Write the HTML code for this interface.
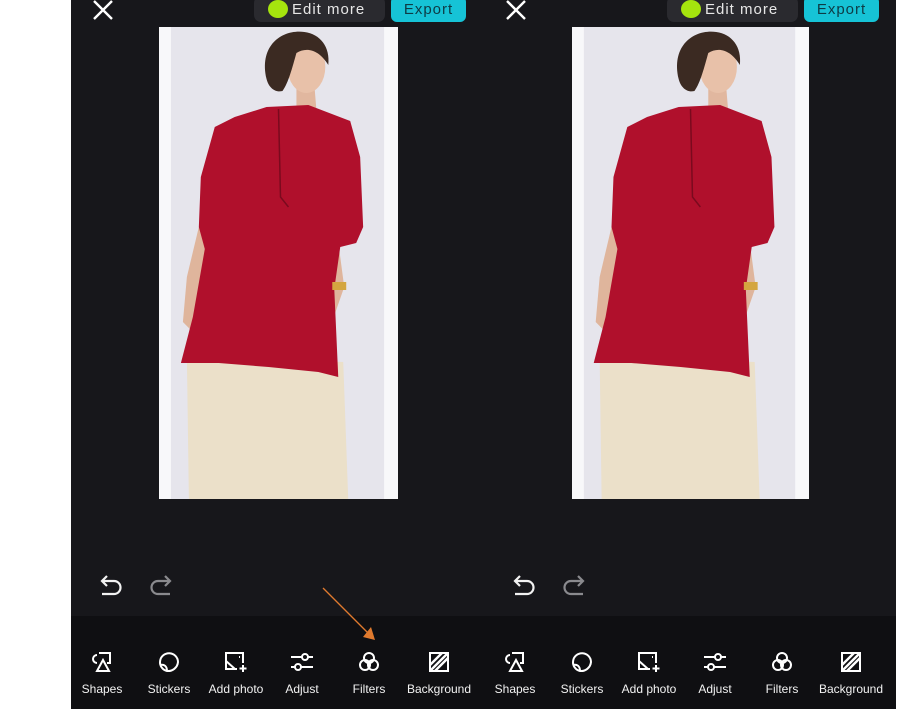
<!DOCTYPE html>
<html><head><meta charset="utf-8"><style>
*{margin:0;padding:0;box-sizing:border-box}
body{width:905px;height:713px;background:#fff;position:relative;overflow:hidden;font-family:"Liberation Sans",sans-serif}
#dark{position:absolute;left:71px;top:0;width:825px;height:709px;background:#17171b}
#tb{position:absolute;left:71px;top:616px;width:825px;height:93px;background:#0f0f12}
.p{position:absolute;top:0;width:413px;height:709px}
.x{position:absolute;left:20px;top:-2px}
.em{position:absolute;left:183px;top:-4px;width:131px;height:26px;background:#2a2a2f;border-radius:7px;color:#e6e6e6;font-size:15px;letter-spacing:1px;line-height:28px;padding-left:38px}
.em i{position:absolute;left:14px;top:4px;width:20px;height:18px;border-radius:50%;background:#a5e40e}
.ex{position:absolute;left:320px;top:-4px;width:75px;height:26px;background:#16c3d6;border-radius:6px;color:#0e3b45;font-size:15px;letter-spacing:1px;line-height:28px;text-align:center}
.ph{position:absolute;left:88px;top:27px}
.u{position:absolute;top:575px}
.it{position:absolute;top:651px;width:84px;margin-left:-42px;text-align:center;color:#f2f2f2;font-size:12px}
.it svg{display:block;margin:0 auto 9px}
</style></head><body>
<div id="dark"></div><div id="tb"></div>

<div class="p" style="left:71px">
<svg class="x" width="24" height="24" viewBox="0 0 24 24"><path d="M3 3L21 21M21 3L3 21" stroke="#fff" stroke-width="2.4"/></svg>
<div class="em"><i></i>Edit more</div><div class="ex">Export</div>
<svg class="ph" width="239" height="472" viewBox="0 0 240 472" preserveAspectRatio="none">
<rect width="240" height="472" fill="#f8f8fa"/><rect x="12" y="0" width="214" height="472" fill="#e6e5ec"/>
<path d="M40 200L28 250L24 295L34 305L46 260L50 215Z" fill="#dfb59c"/>
<path d="M180 215L186 260L172 300L160 296L174 255L172 220Z" fill="#dfb59c"/>
<path d="M28 330L185 335L190 472L30 472Z" fill="#ebe0c9"/>
<path d="M138 58L156 58L158 82L138 82Z" fill="#e1b79f"/>
<ellipse cx="148" cy="40" rx="19" ry="26" fill="#e8c1a9"/>
<path d="M108 52C100 18 124 2 146 5C162 7 172 20 170 38C160 22 148 20 138 26C134 40 130 56 124 64C116 66 110 60 108 52Z" fill="#3b2a22"/>
<path d="M108 80L150 78L192 94L202 130L205 200L198 216L182 220L176 262L180 350L160 345L110 340L60 336L22 336L34 290L46 222L40 200L42 150L56 100L76 90Z" fill="#b0102c"/>
<path d="M120 82L122 170L130 180" stroke="#7a0a1e" stroke-width="1.5" fill="none"/>
<rect x="174" y="255" width="14" height="8" fill="#d4a640"/>
</svg>
<svg class="u" style="left:27px" width="26" height="26" viewBox="0 0 26 26"><path d="M4 6H16A6.5 6.5 0 0 1 16 19H4M9 1L4 6L9 11" stroke="#f2f2f2" stroke-width="2.2" fill="none"/></svg>
<svg class="u" style="left:77px" width="26" height="26" viewBox="0 0 26 26"><path d="M22 6H10A6.5 6.5 0 0 0 10 19H22M17 1L22 6L17 11" stroke="#8a8a8e" stroke-width="2.2" fill="none"/></svg>
<div class="it" style="left:31px"><svg width="24" height="22" viewBox="0 0 24 22"><path d="M7 4A4 4 0 0 0 7 12M9 2H20V12H17M13 9L7 20H19Z" stroke="#fff" stroke-width="2" fill="none"/></svg>Shapes</div>
<div class="it" style="left:98px"><svg width="24" height="22" viewBox="0 0 24 22"><path d="M10 20A9 9 0 1 1 21 11A10 10 0 0 1 10 20ZM10 20C10 15 7 13 3 14" stroke="#fff" stroke-width="2" fill="none"/></svg>Stickers</div>
<div class="it" style="left:165px"><svg width="24" height="22" viewBox="0 0 24 22"><path d="M13 18H2V2H19V12M2 10L11 18M15 6h1M19 14V21M15.5 17.5H22.5" stroke="#fff" stroke-width="2" fill="none"/></svg>Add photo</div>
<div class="it" style="left:231px"><svg width="24" height="22" viewBox="0 0 24 22"><path d="M1 6H12M18 6H23M1 16H5M11 16H23" stroke="#fff" stroke-width="2"/><circle cx="15" cy="6" r="3" stroke="#fff" stroke-width="2" fill="none"/><circle cx="8" cy="16" r="3" stroke="#fff" stroke-width="2" fill="none"/></svg>Adjust</div>
<div class="it" style="left:298px"><svg width="24" height="22" viewBox="0 0 24 22"><circle cx="12" cy="7" r="5" stroke="#fff" stroke-width="2" fill="none"/><circle cx="8" cy="14" r="5" stroke="#fff" stroke-width="2" fill="none"/><circle cx="16" cy="14" r="5" stroke="#fff" stroke-width="2" fill="none"/></svg>Filters</div>
<div class="it" style="left:368px"><svg width="24" height="22" viewBox="0 0 24 22"><rect x="3" y="2" width="18" height="18" stroke="#fff" stroke-width="2" fill="none"/><path d="M3 14L15 2M8 20L21 7M3 20L21 2" stroke="#fff" stroke-width="2.4"/></svg>Background</div>
</div>

<div class="p" style="left:484px">
<svg class="x" width="24" height="24" viewBox="0 0 24 24"><path d="M3 3L21 21M21 3L3 21" stroke="#fff" stroke-width="2.4"/></svg>
<div class="em"><i></i>Edit more</div><div class="ex">Export</div>
<svg class="ph" width="237" height="472" viewBox="0 0 240 472" preserveAspectRatio="none">
<rect width="240" height="472" fill="#f8f8fa"/><rect x="12" y="0" width="214" height="472" fill="#e6e5ec"/>
<path d="M40 200L28 250L24 295L34 305L46 260L50 215Z" fill="#dfb59c"/>
<path d="M180 215L186 260L172 300L160 296L174 255L172 220Z" fill="#dfb59c"/>
<path d="M28 330L185 335L190 472L30 472Z" fill="#ebe0c9"/>
<path d="M138 58L156 58L158 82L138 82Z" fill="#e1b79f"/>
<ellipse cx="148" cy="40" rx="19" ry="26" fill="#e8c1a9"/>
<path d="M108 52C100 18 124 2 146 5C162 7 172 20 170 38C160 22 148 20 138 26C134 40 130 56 124 64C116 66 110 60 108 52Z" fill="#3b2a22"/>
<path d="M108 80L150 78L192 94L202 130L205 200L198 216L182 220L176 262L180 350L160 345L110 340L60 336L22 336L34 290L46 222L40 200L42 150L56 100L76 90Z" fill="#b0102c"/>
<path d="M120 82L122 170L130 180" stroke="#7a0a1e" stroke-width="1.5" fill="none"/>
<rect x="174" y="255" width="14" height="8" fill="#d4a640"/>
</svg>
<svg class="u" style="left:27px" width="26" height="26" viewBox="0 0 26 26"><path d="M4 6H16A6.5 6.5 0 0 1 16 19H4M9 1L4 6L9 11" stroke="#f2f2f2" stroke-width="2.2" fill="none"/></svg>
<svg class="u" style="left:77px" width="26" height="26" viewBox="0 0 26 26"><path d="M22 6H10A6.5 6.5 0 0 0 10 19H22M17 1L22 6L17 11" stroke="#8a8a8e" stroke-width="2.2" fill="none"/></svg>
<div class="it" style="left:31px"><svg width="24" height="22" viewBox="0 0 24 22"><path d="M7 4A4 4 0 0 0 7 12M9 2H20V12H17M13 9L7 20H19Z" stroke="#fff" stroke-width="2" fill="none"/></svg>Shapes</div>
<div class="it" style="left:98px"><svg width="24" height="22" viewBox="0 0 24 22"><path d="M10 20A9 9 0 1 1 21 11A10 10 0 0 1 10 20ZM10 20C10 15 7 13 3 14" stroke="#fff" stroke-width="2" fill="none"/></svg>Stickers</div>
<div class="it" style="left:165px"><svg width="24" height="22" viewBox="0 0 24 22"><path d="M13 18H2V2H19V12M2 10L11 18M15 6h1M19 14V21M15.5 17.5H22.5" stroke="#fff" stroke-width="2" fill="none"/></svg>Add photo</div>
<div class="it" style="left:231px"><svg width="24" height="22" viewBox="0 0 24 22"><path d="M1 6H12M18 6H23M1 16H5M11 16H23" stroke="#fff" stroke-width="2"/><circle cx="15" cy="6" r="3" stroke="#fff" stroke-width="2" fill="none"/><circle cx="8" cy="16" r="3" stroke="#fff" stroke-width="2" fill="none"/></svg>Adjust</div>
<div class="it" style="left:298px"><svg width="24" height="22" viewBox="0 0 24 22"><circle cx="12" cy="7" r="5" stroke="#fff" stroke-width="2" fill="none"/><circle cx="8" cy="14" r="5" stroke="#fff" stroke-width="2" fill="none"/><circle cx="16" cy="14" r="5" stroke="#fff" stroke-width="2" fill="none"/></svg>Filters</div>
<div class="it" style="left:367px"><svg width="24" height="22" viewBox="0 0 24 22"><rect x="3" y="2" width="18" height="18" stroke="#fff" stroke-width="2" fill="none"/><path d="M3 14L15 2M8 20L21 7M3 20L21 2" stroke="#fff" stroke-width="2.4"/></svg>Background</div>
</div>

<svg style="position:absolute;left:318px;top:585px" width="60" height="56" viewBox="0 0 60 56"><path d="M5 3L50 48" stroke="#e07a2e" stroke-width="1.3"/><path d="M45 52L57 55L53 42Z" fill="#e07a2e"/></svg>
</body></html>
